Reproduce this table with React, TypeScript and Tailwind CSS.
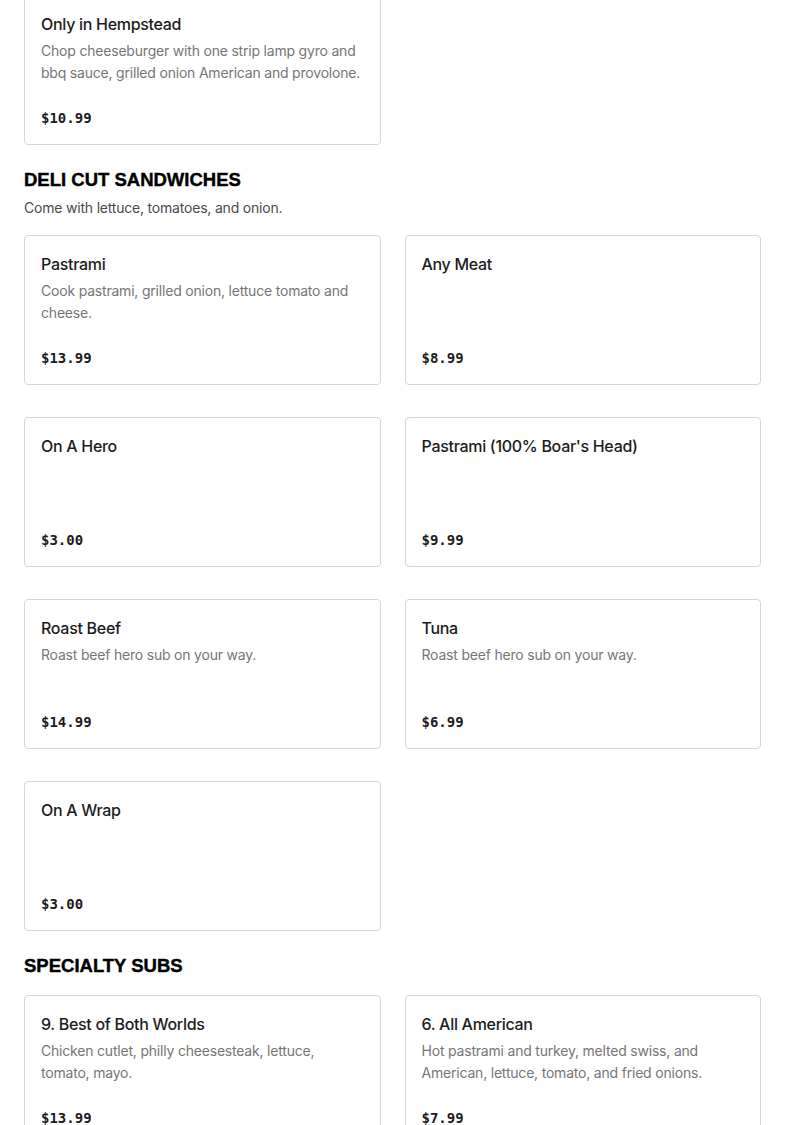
type Item = {
  name: string;
  desc?: string;
  price: string;
};

const top: Item[] = [
  {
    name: 'Only in Hempstead',
    desc: 'Chop cheeseburger with one strip lamp gyro and bbq sauce, grilled onion American and provolone.',
    price: '$10.99',
  },
];

const deli: Item[] = [
  { name: 'Pastrami', desc: 'Cook pastrami, grilled onion, lettuce tomato and cheese.', price: '$13.99' },
  { name: 'Any Meat', price: '$8.99' },
  { name: 'On A Hero', price: '$3.00' },
  { name: "Pastrami (100% Boar's Head)", price: '$9.99' },
  { name: 'Roast Beef', desc: 'Roast beef hero sub on your way.', price: '$14.99' },
  { name: 'Tuna', desc: 'Roast beef hero sub on your way.', price: '$6.99' },
  { name: 'On A Wrap', price: '$3.00' },
];

const specialty: Item[] = [
  { name: '9. Best of Both Worlds', desc: 'Chicken cutlet, philly cheesesteak, lettuce, tomato, mayo.', price: '$13.99' },
  { name: '6. All American', desc: 'Hot pastrami and turkey, melted swiss, and American, lettuce, tomato, and fried onions.', price: '$7.99' },
];

function MenuCard({ item }: { item: Item }) {
  return (
    <div className="h-[150px] border border-[#d6d6d6] rounded-[4px] bg-white px-4 pt-4 pb-4 flex flex-col">
      <h3 className="text-base leading-6 font-medium tracking-[-0.3px] text-[#1c1c1c]">{item.name}</h3>
      {item.desc && <p className="mt-1 text-sm leading-[22px] tracking-[-0.2px] text-[#767676]">{item.desc}</p>}
      <div className="mt-auto text-sm leading-5 font-bold text-[#1c1c1c] font-['DejaVu_Sans_Mono',monospace]">{item.price}</div>
    </div>
  );
}

function Grid({ items }: { items: Item[] }) {
  return (
    <div className="grid grid-cols-2 gap-x-6 gap-y-8">
      {items.map((it, i) => (
        <MenuCard key={i} item={it} />
      ))}
    </div>
  );
}

function Section({ title, subtitle, items }: { title: string; subtitle?: string; items: Item[] }) {
  return (
    <section className="pt-[21px]">
      <div className="mb-[15px]">
        <h2 className="text-[18.5px] leading-7 font-black text-black font-['Liberation_Sans',Arial,sans-serif] [-webkit-text-stroke:0.4px_black]">
          {title}
        </h2>
        {subtitle && <p className="mt-0.5 text-sm leading-6 tracking-[-0.2px] text-[#4a4a4a]">{subtitle}</p>}
      </div>
      <Grid items={items} />
    </section>
  );
}

export default function App() {
  return (
    <div className="min-h-screen bg-white font-['Inter','Noto_Sans',sans-serif] overflow-hidden">
      <div className="px-6 -mt-[5px]">
        <Grid items={top} />
        <Section title="DELI CUT SANDWICHES" subtitle="Come with lettuce, tomatoes, and onion." items={deli} />
        <Section title="SPECIALTY SUBS" items={specialty} />
      </div>
    </div>
  );
}
